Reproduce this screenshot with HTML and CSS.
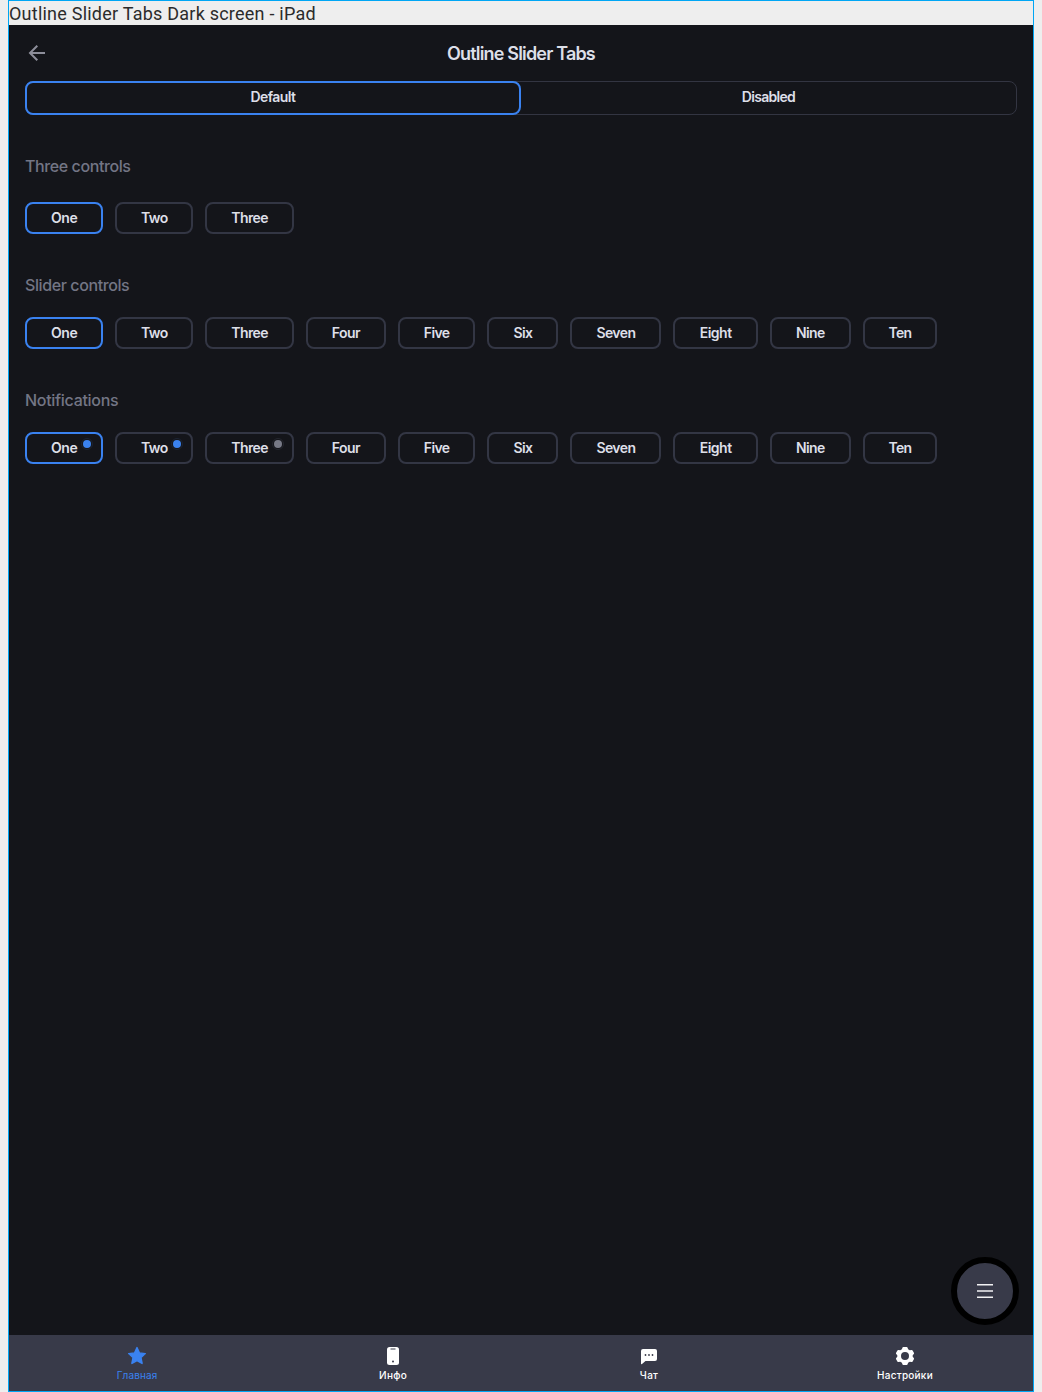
FILE: index.html
```html
<!DOCTYPE html>
<html lang="en">
<head>
<meta charset="utf-8">
<title>Outline Slider Tabs</title>
<link rel="stylesheet" href="styles.css">
</head>
<body>
<div class="frame">
  <div class="caption"><span>Outline Slider Tabs Dark screen - iPad</span></div>
  <main class="screen">
    <header class="header">
      <svg class="back" width="24" height="24" viewBox="0 0 24 24"><path d="M20 12H5.500M12.300 4.700L5 12l7.300 7.300"/></svg>
      <h1>Outline Slider Tabs</h1>
    </header>
    <div class="segmented">
      <div class="segment segment-active">Default</div>
      <div class="segment">Disabled</div>
    </div>
    <section class="group group-first">
      <h2>Three controls</h2>
      <div class="chips">
        <div class="chip active">One</div><div class="chip">Two</div><div class="chip">Three</div>
      </div>
    </section>
    <section class="group">
      <h2>Slider controls</h2>
      <div class="chips">
        <div class="chip active">One</div><div class="chip">Two</div><div class="chip">Three</div><div class="chip">Four</div><div class="chip">Five</div><div class="chip">Six</div><div class="chip">Seven</div><div class="chip">Eight</div><div class="chip">Nine</div><div class="chip">Ten</div>
      </div>
    </section>
    <section class="group">
      <h2 class="wide">Notifications</h2>
      <div class="chips">
        <div class="chip active">One<i class="dot"></i></div><div class="chip">Two<i class="dot"></i></div><div class="chip">Three<i class="dot muted"></i></div><div class="chip">Four</div><div class="chip">Five</div><div class="chip">Six</div><div class="chip">Seven</div><div class="chip">Eight</div><div class="chip">Nine</div><div class="chip">Ten</div>
      </div>
    </section>
    <button class="fab" aria-label="Menu"><svg width="16" height="16" viewBox="0 0 16 16"><path d="M0 1.750h16M0 8h16M0 14.250h16"/></svg></button>
  </main>
  <nav class="tabbar">
    <div class="tab current">
      <svg width="24" height="24" viewBox="0 0 24 24"><path d="M12 3.600l2.400 5.300 5.900.700-4.300 4 1.100 5.900-5.100-2.900-5.100 2.900 1.100-5.900-4.300-4 5.900-.7z" fill="currentColor" stroke="currentColor" stroke-width="1.400" stroke-linejoin="round"/></svg>
      <span>Главная</span>
    </div>
    <div class="tab">
      <svg width="24" height="24" viewBox="0 0 24 24"><rect x="6" y="3" width="12" height="18" rx="2.500" fill="currentColor"/><path d="M9.500 5h5" stroke="#383a49" stroke-width="1"/><circle cx="12" cy="17.500" r="1" fill="#383a49"/></svg>
      <span>Инфо</span>
    </div>
    <div class="tab">
      <svg width="24" height="24" viewBox="0 0 24 24"><path d="M6 5h12a2 2 0 0 1 2 2v8a2 2 0 0 1-2 2H8.500L5 20q-1 .6-1-.6V7a2 2 0 0 1 2-2z" fill="currentColor"/><g fill="#383a49"><circle cx="8.500" cy="11" r=".9"/><circle cx="12" cy="11" r=".9"/><circle cx="15.500" cy="11" r=".9"/></g></svg>
      <span>Чат</span>
    </div>
    <div class="tab">
      <svg width="24" height="24" viewBox="0 0 24 24"><path d="M10.400 3h3.200q.8 0 1 .8l.5 1.500 1.700 1 1.600-.3q.8-.2 1.200.5l1.300 2.300q.4.700-.1 1.300L19.700 11.200v1.600l1.100 1.100q.5.600.1 1.300l-1.300 2.300q-.4.700-1.200.5l-1.600-.3-1.700 1-.5 1.500q-.2.800-1 .8h-3.200q-.8 0-1-.8l-.5-1.500-1.700-1-1.600.3q-.8.200-1.200-.5l-1.300-2.300q-.4-.7.100-1.300l1.100-1.100v-1.600l-1.100-1.100q-.5-.6-.1-1.300l1.300-2.300q.4-.7 1.200-.5l1.600.3 1.700-1 .5-1.500q.2-.8 1-.8zM12 8a4 4 0 1 0 0 8 4 4 0 0 0 0-8z" fill="currentColor" fill-rule="evenodd"/></svg>
      <span>Настройки</span>
    </div>
  </nav>
</div>
</body>
</html>
```
FILE: styles.css
```css
* { box-sizing: border-box; }
body { margin: 0; background: #eee; font-family: Inter, sans-serif; }
.frame { width: 1026px; height: 1392px; margin-left: 8px; border: 1px solid #00a6f4; display: flex; flex-direction: column; }
.caption { height: 24px; font: 18px/25px Roboto, sans-serif; letter-spacing: .23px; color: #2b2b2b; white-space: nowrap; }
.screen { flex: 1; position: relative; background: #14151a; padding: 0 16px; color: #dddfe8; }
.header { height: 56px; display: grid; grid-template-columns: 24px 1fr 24px; align-items: center; }
.back { fill: none; stroke: #8d8e9a; stroke-width: 2; }
h1 { margin: 2px 0 0; text-align: center; font-size: 18px; line-height: 24px; font-weight: 600; letter-spacing: -.83px; }
.segmented { height: 34px; display: grid; grid-template-columns: 495px 1fr; border: 1px solid #333542; border-radius: 8px; }
.segment { display: flex; align-items: center; justify-content: center; padding-bottom: 3px; font-size: 14px; font-weight: 600; letter-spacing: -.7px; }
.segment-active { margin: -1px 0 -1px -1px; border: 2px solid #3a82f0; border-radius: 8px; letter-spacing: -.6px; }
.group { padding-top: 39px; }
.group-first h2 { margin-bottom: 24px; }
h2 { margin: 0 0 20px; font-size: 16px; line-height: 24px; font-weight: 500; letter-spacing: -.4px; color: #737585; }
h2.wide { letter-spacing: -.3px; }
.chips { display: flex; gap: 12px; }
.chip { flex: none; width: 78.4px; position: relative; height: 32px; border: 2px solid #333644; border-radius: 8px; text-align: center; font-size: 14px; line-height: 28px; font-weight: 600; letter-spacing: -.6px; white-space: nowrap; }
.chip:nth-child(1) { letter-spacing: -.4px; }
.chip:nth-child(2) { width: 78px; }
.chip:nth-child(3) { width: 88.5px; }
.chip:nth-child(4) { width: 80px; }
.chip:nth-child(5) { width: 77.5px; }
.chip:nth-child(6) { width: 71px; }
.chip:nth-child(7) { width: 91px; }
.chip:nth-child(8) { width: 84.5px; letter-spacing: -.5px; }
.chip:nth-child(9) { width: 81px; }
.chip:nth-child(10) { width: 74px; letter-spacing: -.8px; }
.chip.active { border-color: #3a82f0; }
.dot { position: absolute; right: 10px; top: 6px; width: 8px; height: 8px; border-radius: 50%; background: #3a82f0; outline: 1px solid #1c2433; outline-offset: 1px; }
.dot.muted { background: #777986; outline-color: #24262e; }
.fab { position: absolute; right: 14px; bottom: 10px; width: 68px; height: 68px; padding: 0; border: 6px solid #000; border-radius: 50%; background: #383a49; display: grid; place-items: center; }
.fab path { stroke: #f1f1f3; stroke-width: 1.5; fill: none; }
.tabbar { height: 56px; display: flex; background: #383a49; color: #fff; }
.tab { flex: 1; display: flex; flex-direction: column; align-items: center; padding-top: 9px; font: 500 10px/14px Inter, sans-serif; letter-spacing: .25px; }
.current { color: #3a82f0; }
.current span { font-weight: 400; letter-spacing: .1px; }
```
